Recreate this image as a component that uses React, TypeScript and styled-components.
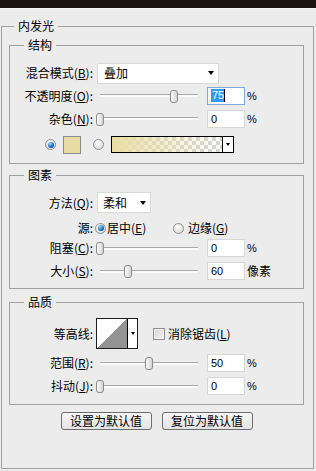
import React from "react";
import styled, { createGlobalStyle } from "styled-components";

const GlobalStyle = createGlobalStyle`
  html, body { margin: 0; padding: 0; background: #ececec; }
  body {
    font-family: "Noto Sans CJK SC", "Noto Sans", sans-serif;
    font-size: 12px;
    color: #000;
  }
  * { box-sizing: border-box; }
`;

const Window = styled.div`
  width: 316px;
  height: 471px;
  background: #ececec;
  overflow: hidden;
  display: flex;
  flex-direction: column;
`;

const TopBar = styled.div`
  height: 9px;
  flex-shrink: 0;
  background: #1b1610;
  border-bottom: 1px solid #f7f7f7;
`;

const OuterGroup = styled.div`
  position: relative;
  margin: 17px 2px 0 1px;
  height: 443px;
  flex-shrink: 0;
  border: 1px solid #a0a0a0;
  padding: 18px 9px 0 7px;
  display: flex;
  flex-direction: column;
`;

const Group = styled.div<{ $pt: number; $pb: number; $mt?: number }>`
  position: relative;
  flex-shrink: 0;
  margin-top: ${(p) => p.$mt ?? 0}px;
  border: 1px solid #a0a0a0;
  padding: ${(p) => p.$pt}px 0 ${(p) => p.$pb}px 0;
  display: flex;
  flex-direction: column;
`;

const Title = styled.span<{ $left: number }>`
  position: absolute;
  top: -9px;
  left: ${(p) => p.$left}px;
  padding: 0 4px;
  background: #ececec;
  line-height: 16px;
  font-size: 12px;
  white-space: nowrap;
`;

const Row = styled.div<{ $h: number; $mt?: number; $pl?: number }>`
  display: flex;
  align-items: center;
  flex-shrink: 0;
  height: ${(p) => p.$h}px;
  margin-top: ${(p) => p.$mt ?? 0}px;
  padding-left: ${(p) => p.$pl ?? 0}px;
`;

const Label = styled.span`
  width: 83px;
  flex-shrink: 0;
  text-align: right;
  white-space: nowrap;
  line-height: 16px;
`;

const Key = styled.span`
  text-decoration: underline;
  text-underline-offset: 1px;
`;

const Select = styled.div<{ $w: number }>`
  width: ${(p) => p.$w}px;
  height: 21px;
  margin-left: 4px;
  background: #fff;
  border: 1px solid #d9d9d9;
  display: flex;
  align-items: center;
  justify-content: space-between;
  padding: 0 4px 0 5px;
  line-height: 16px;
`;

const Arrow = styled.span<{ $size?: number }>`
  width: 0;
  height: 0;
  border-left: ${(p) => (p.$size ?? 7) / 2}px solid transparent;
  border-right: ${(p) => (p.$size ?? 7) / 2}px solid transparent;
  border-top: ${(p) => Math.round((p.$size ?? 7) * 0.6)}px solid #000;
`;

const SliderBox = styled.div`
  position: relative;
  width: 106px;
  height: 14px;
  margin-left: 3px;
  display: flex;
  align-items: center;
  padding: 0 4px;
  flex-shrink: 0;
`;

const Track = styled.div`
  flex: 1;
  height: 3px;
  border-top: 1px solid #a8a8a8;
  background: #fbfbfb;
`;

const ThumbWrap = styled.span`
  position: absolute;
  top: 0;
  width: 8px;
  height: 13px;
  display: block;
`;

const Slider: React.FC<{ pos: number }> = ({ pos }) => (
  <SliderBox>
    <Track />
    <ThumbWrap style={{ left: `${pos * 98}px` }}>
      <svg width="8" height="13" viewBox="0 0 8 13">
        <defs>
          <linearGradient id="tg" x1="0" y1="0" x2="1" y2="0">
            <stop offset="0" stopColor="#ffffff" />
            <stop offset="1" stopColor="#d2d2d2" />
          </linearGradient>
        </defs>
        <rect x="0.5" y="0.5" width="7" height="12" rx="2.5" fill="url(#tg)" stroke="#8a8a8a" />
      </svg>
    </ThumbWrap>
  </SliderBox>
);

const Field = styled.div<{ $focus?: boolean }>`
  width: 38px;
  height: 18px;
  margin-left: 5px;
  flex-shrink: 0;
  background: #fff;
  border: 1px solid ${(p) => (p.$focus ? "#7fa9dc" : "#d6d6d6")};
  font-family: "Liberation Sans", Arial, sans-serif;
  font-size: 11px;
  line-height: 16px;
  padding-left: 3px;
  display: flex;
  align-items: center;
`;

const Selected = styled.span`
  background: #3399ff;
  color: #fff;
  line-height: 13px;
  padding: 0 0 0 1px;
`;

const Caret = styled.span`
  width: 1px;
  height: 13px;
  background: #000;
`;

const Unit = styled.span<{ $latin?: boolean }>`
  margin-left: 2px;
  white-space: nowrap;
  font-family: ${(p) =>
    p.$latin ? `"Liberation Sans", Arial, sans-serif` : `"Noto Sans CJK SC", sans-serif`};
  font-size: ${(p) => (p.$latin ? 11 : 12)}px;
  line-height: 16px;
`;

const Radio = styled.span<{ $on?: boolean; $ml?: number }>`
  width: 11px;
  height: 11px;
  flex-shrink: 0;
  margin-left: ${(p) => p.$ml ?? 0}px;
  border-radius: 50%;
  border: 1px solid #8f8f8f;
  background: radial-gradient(circle at 40% 35%, #ffffff, #d0d0d0);
  display: inline-flex;
  align-items: center;
  justify-content: center;
  &::after {
    content: "";
    width: 6px;
    height: 6px;
    border-radius: 50%;
    background: radial-gradient(circle at 35% 30%, #9bdcff, #1670c0 55%, #0b3f78);
    display: ${(p) => (p.$on ? "block" : "none")};
  }
`;

const Option = styled.span<{ $w?: number }>`
  display: flex;
  align-items: center;
  flex-shrink: 0;
  width: ${(p) => (p.$w ? `${p.$w}px` : "auto")};
  line-height: 16px;
  white-space: nowrap;
`;

const OptionText = styled.span`
  margin-left: 1px;
`;

const Swatch = styled.span`
  width: 18px;
  height: 18px;
  margin-left: 7px;
  flex-shrink: 0;
  border: 1px solid #8c8c8c;
  background: #e8dca5;
`;

const GradientBox = styled.div`
  width: 123px;
  height: 17px;
  margin-left: 7px;
  flex-shrink: 0;
  border: 1px solid #000;
  display: flex;
`;

const GradientFill = styled.div`
  flex: 1;
  background:
    linear-gradient(to right, rgba(233, 222, 166, 1), rgba(233, 222, 166, 0)),
    repeating-conic-gradient(#d4d4d4 0% 25%, #ffffff 0% 50%) 0 0 / 8px 8px;
`;

const ArrowPart = styled.div<{ $w: number }>`
  width: ${(p) => p.$w}px;
  flex-shrink: 0;
  border-left: 1px solid #000;
  background: #fff;
  display: flex;
  align-items: center;
  justify-content: center;
`;

const Contour = styled.div`
  width: 42px;
  height: 31px;
  margin-left: 3px;
  flex-shrink: 0;
  border: 1px solid #1e1e1e;
  display: flex;
`;

const ContourPreview = styled.div`
  flex: 1;
  background: linear-gradient(to bottom right, #ffffff 50%, #939393 50%);
`;

const Checkbox = styled.span`
  width: 12px;
  height: 12px;
  margin-left: 15px;
  flex-shrink: 0;
  border: 1px solid #8e8e8e;
  background: linear-gradient(135deg, #d3d3d3, #f7f7f7);
  box-shadow: inset 0 0 0 1px #f2f2f2;
`;

const CheckLabel = styled.span`
  margin-left: 3px;
  line-height: 16px;
  white-space: nowrap;
`;

const Buttons = styled.div`
  display: flex;
  justify-content: center;
  gap: 10px;
  margin-top: 7px;
  flex-shrink: 0;
`;

const Button = styled.button`
  width: 91px;
  height: 18px;
  padding: 0;
  border: 1px solid #6e6e6e;
  border-radius: 3px;
  background: linear-gradient(#f6f6f6, #e3e3e3);
  font-family: "Noto Sans CJK SC", sans-serif;
  font-size: 12px;
  line-height: 16px;
  color: #000;
`;

const SliderRow: React.FC<{
  h: number;
  mt?: number;
  label: string;
  k: string;
  pos: number;
  value: React.ReactNode;
  focus?: boolean;
  unit: string;
  latinUnit?: boolean;
}> = ({ h, mt, label, k, pos, value, focus, unit, latinUnit }) => (
  <Row $h={h} $mt={mt}>
    <Label>
      {label}(<Key>{k}</Key>):
    </Label>
    <Slider pos={pos} />
    <Field $focus={focus}>{value}</Field>
    <Unit $latin={latinUnit}>{unit}</Unit>
  </Row>
);

export default function App() {
  return (
    <Window>
      <GlobalStyle />
      <TopBar />
      <OuterGroup>
        <Title $left={12}>内发光</Title>

        <Group $pt={16} $pb={7}>
          <Title $left={14}>结构</Title>
          <Row $h={22}>
            <Label>
              混合模式(<Key>B</Key>):
            </Label>
            <Select $w={122}>
              <span style={{ marginLeft: 1 }}>叠加</span>
              <Arrow />
            </Select>
          </Row>
          <SliderRow
            h={23}
            label="不透明度"
            k="O"
            pos={0.75}
            focus
            value={
              <>
                <Selected>75</Selected>
                <Caret />
              </>
            }
            unit="%"
            latinUnit
          />
          <SliderRow h={23} label="杂色" k="N" pos={0} value="0" unit="%" latinUnit />
          <Row $h={23} $mt={3} $pl={35}>
            <Radio $on />
            <Swatch />
            <Radio $ml={12} />
            <GradientBox>
              <GradientFill />
              <ArrowPart $w={11}>
                <Arrow $size={5} />
              </ArrowPart>
            </GradientBox>
          </Row>
        </Group>

        <Group $pt={15} $pb={5} $mt={11}>
          <Title $left={14}>图素</Title>
          <Row $h={23}>
            <Label>
              方法(<Key>Q</Key>):
            </Label>
            <Select $w={54}>
              <span>柔和</span>
              <Arrow />
            </Select>
          </Row>
          <Row $h={20} $mt={4}>
            <Label>源:</Label>
            <Option $w={78} style={{ marginLeft: 2 }}>
              <Radio $on />
              <OptionText>
                居中(<Key>E</Key>)
              </OptionText>
            </Option>
            <Option>
              <Radio />
              <OptionText style={{ marginLeft: 4 }}>
                边缘(<Key>G</Key>)
              </OptionText>
            </Option>
          </Row>
          <SliderRow h={20} label="阻塞" k="C" pos={0} value="0" unit="%" latinUnit />
          <SliderRow h={24} mt={1} label="大小" k="S" pos={0.286} value="60" unit="像素" />
        </Group>

        <Group $pt={15} $pb={7} $mt={13}>
          <Title $left={14}>品质</Title>
          <Row $h={31}>
            <Label>等高线:</Label>
            <Contour>
              <ContourPreview />
              <ArrowPart $w={10}>
                <Arrow $size={5} />
              </ArrowPart>
            </Contour>
            <Checkbox />
            <CheckLabel>
              消除锯齿(<Key>L</Key>)
            </CheckLabel>
          </Row>
          <SliderRow h={24} mt={2} label="范围" k="R" pos={0.5} value="50" unit="%" latinUnit />
          <SliderRow h={22} label="抖动" k="J" pos={0} value="0" unit="%" latinUnit />
        </Group>

        <Buttons>
          <Button>设置为默认值</Button>
          <Button>复位为默认值</Button>
        </Buttons>
      </OuterGroup>
    </Window>
  );
}
